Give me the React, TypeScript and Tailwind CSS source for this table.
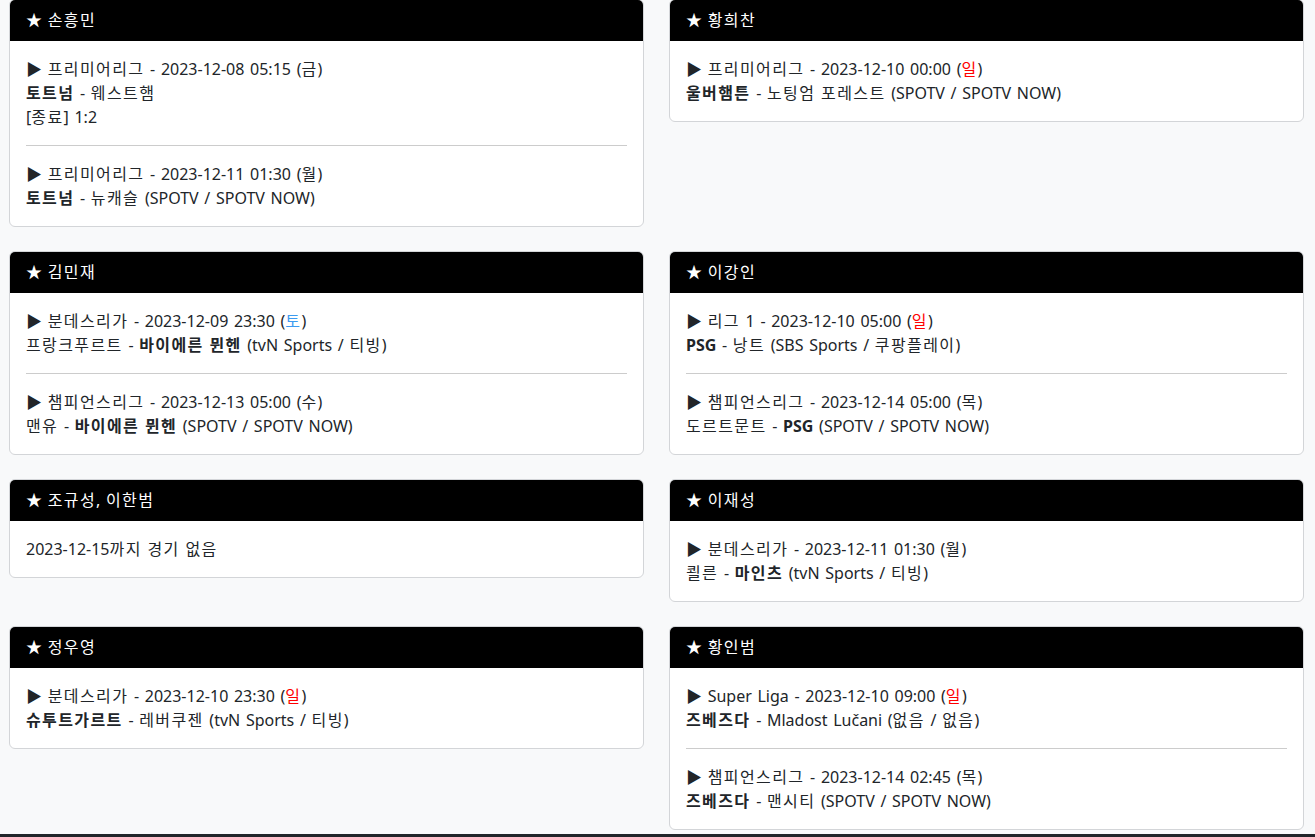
type Part = { text: string; bold?: boolean };

interface Match {
  league: string;
  datetime: string;
  day: string;
  teams: Part[];
  extra?: string;
}

interface Player {
  name: string;
  matches: Match[];
  empty?: string;
}

const dayColor: Record<string, string> = {
  일: "text-[#ff0000]",
  토: "text-[#3d9bf0]",
};

const left: Player[] = [
  {
    name: "손흥민",
    matches: [
      {
        league: "프리미어리그",
        datetime: "2023-12-08 05:15",
        day: "금",
        teams: [{ text: "토트넘", bold: true }, { text: " - 웨스트햄" }],
        extra: "[종료] 1:2",
      },
      {
        league: "프리미어리그",
        datetime: "2023-12-11 01:30",
        day: "월",
        teams: [{ text: "토트넘", bold: true }, { text: " - 뉴캐슬 (SPOTV / SPOTV NOW)" }],
      },
    ],
  },
  {
    name: "김민재",
    matches: [
      {
        league: "분데스리가",
        datetime: "2023-12-09 23:30",
        day: "토",
        teams: [
          { text: "프랑크푸르트 - " },
          { text: "바이에른 뮌헨", bold: true },
          { text: " (tvN Sports / 티빙)" },
        ],
      },
      {
        league: "챔피언스리그",
        datetime: "2023-12-13 05:00",
        day: "수",
        teams: [
          { text: "맨유 - " },
          { text: "바이에른 뮌헨", bold: true },
          { text: " (SPOTV / SPOTV NOW)" },
        ],
      },
    ],
  },
  { name: "조규성, 이한범", matches: [], empty: "2023-12-15까지 경기 없음" },
  {
    name: "정우영",
    matches: [
      {
        league: "분데스리가",
        datetime: "2023-12-10 23:30",
        day: "일",
        teams: [{ text: "슈투트가르트", bold: true }, { text: " - 레버쿠젠 (tvN Sports / 티빙)" }],
      },
    ],
  },
];

const right: Player[] = [
  {
    name: "황희찬",
    matches: [
      {
        league: "프리미어리그",
        datetime: "2023-12-10 00:00",
        day: "일",
        teams: [{ text: "울버햄튼", bold: true }, { text: " - 노팅엄 포레스트 (SPOTV / SPOTV NOW)" }],
      },
    ],
  },
  {
    name: "이강인",
    matches: [
      {
        league: "리그 1",
        datetime: "2023-12-10 05:00",
        day: "일",
        teams: [{ text: "PSG", bold: true }, { text: " - 낭트 (SBS Sports / 쿠팡플레이)" }],
      },
      {
        league: "챔피언스리그",
        datetime: "2023-12-14 05:00",
        day: "목",
        teams: [
          { text: "도르트문트 - " },
          { text: "PSG", bold: true },
          { text: " (SPOTV / SPOTV NOW)" },
        ],
      },
    ],
  },
  {
    name: "이재성",
    matches: [
      {
        league: "분데스리가",
        datetime: "2023-12-11 01:30",
        day: "월",
        teams: [
          { text: "쾰른 - " },
          { text: "마인츠", bold: true },
          { text: " (tvN Sports / 티빙)" },
        ],
      },
    ],
  },
  {
    name: "황인범",
    matches: [
      {
        league: "Super Liga",
        datetime: "2023-12-10 09:00",
        day: "일",
        teams: [{ text: "즈베즈다", bold: true }, { text: " - Mladost Lučani (없음 / 없음)" }],
      },
      {
        league: "챔피언스리그",
        datetime: "2023-12-14 02:45",
        day: "목",
        teams: [{ text: "즈베즈다", bold: true }, { text: " - 맨시티 (SPOTV / SPOTV NOW)" }],
      },
    ],
  },
];

// hangul glyphs in the reference font run a bit wider, so space them out a little
function K({ text }: { text: string }) {
  return (
    <>
      {text.split(/([가-힣]+)/).map((s, i) =>
        /[가-힣]/.test(s) ? (
          <span key={i} className="tracking-[1.4px]">
            {s}
          </span>
        ) : (
          s
        )
      )}
    </>
  );
}

function MatchItem({ match }: { match: Match }) {
  return (
    <div>
      <p>
        ▶ <K text={match.league} /> - {match.datetime} (
        <span className={dayColor[match.day] ?? ""}>
          <K text={match.day} />
        </span>
        )
      </p>
      <p>
        {match.teams.map((t, i) =>
          t.bold ? (
            <b key={i} className="font-bold">
              <K text={t.text} />
            </b>
          ) : (
            <K key={i} text={t.text} />
          )
        )}
      </p>
      {match.extra && (
        <p>
          <K text={match.extra} />
        </p>
      )}
    </div>
  );
}

function PlayerCard({ player }: { player: Player }) {
  return (
    <section className="overflow-hidden rounded-md border border-[#d3d5d8] bg-white">
      <div className="border-b border-black bg-black px-4 py-2 text-white">
        ★ <K text={player.name} />
      </div>
      <div className="p-4">
        {player.empty && (
          <p>
            <K text={player.empty} />
          </p>
        )}
        {player.matches.map((m, i) => (
          <div key={i}>
            {i > 0 && <hr className="my-4 border-t border-[#cccccc]" />}
            <MatchItem match={m} />
          </div>
        ))}
      </div>
    </section>
  );
}

export default function App() {
  const rows = left.map((p, i) => [p, right[i]]);
  return (
    <div
      className="min-h-[837px] bg-[#f8f9fa] text-base leading-6 text-[#212529] [word-spacing:1.5px]"
      style={{ fontFamily: '"Noto Sans", "Noto Sans CJK KR", sans-serif' }}
    >
      <div className="-mt-px grid grid-cols-2 items-start gap-x-[25px] gap-y-[24px] pl-[9px] pr-[11px]">
        {rows.map(([a, b], i) => [
          <PlayerCard key={`l${i}`} player={a} />,
          <PlayerCard key={`r${i}`} player={b} />,
        ])}
      </div>
      <div className="mt-1 h-[60px] bg-[#212529]" />
    </div>
  );
}
